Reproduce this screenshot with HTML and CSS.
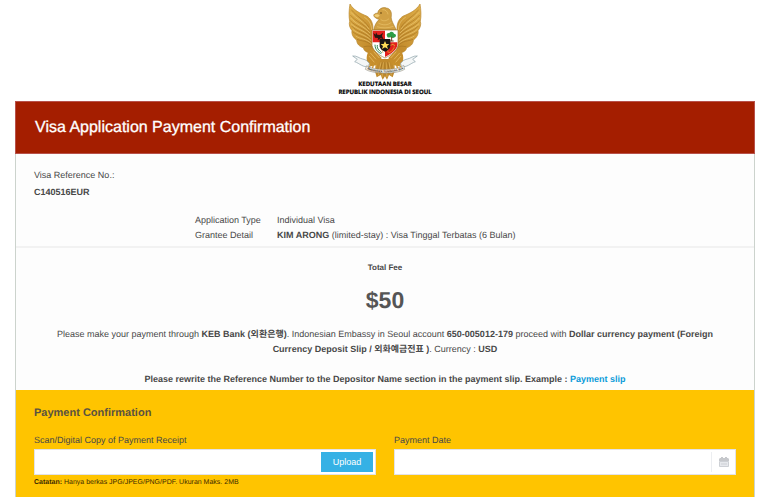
FILE: index.html
```html
<!DOCTYPE html>
<html lang="en">
<head>
<meta charset="utf-8">
<title>Visa Application Payment Confirmation</title>
<link rel="stylesheet" href="styles.css">
</head>
<body>
<header class="masthead">
  <svg class="emblem" viewBox="36 9 222 231" aria-hidden="true">
    <defs>
      <linearGradient id="gold" x1="0" y1="0" x2="1" y2="1">
        <stop offset="0" stop-color="#e0b04a"/>
        <stop offset="1" stop-color="#bd8426"/>
      </linearGradient>
      <g id="wing">
        <path fill="url(#gold)" stroke="#b8862d" stroke-width="2" d="M42 12 C39 30 38 48 41 64 C38 72 41 84 48 92 C46 103 52 113 62 120 C62 132 71 140 82 143 C83 151 91 157 99 158 L119 150 L110 95 C114 70 104 55 92 48 C72 40 52 30 42 12 Z"/>
        <g fill="none" stroke="#9c6b1d" stroke-width="1.5">
          <path d="M46 29 C62 50 82 56 99 82"/>
          <path d="M43 45 C60 66 82 69 101 94"/>
          <path d="M43 62 C60 81 82 83 103 105"/>
          <path d="M47 78 C61 95 84 96 105 116"/>
          <path d="M50 95 C67 110 85 108 107 127"/>
          <path d="M63 118 C79 125 92 120 109 138"/>
          <path d="M83 140 C92 140 99 134 112 145"/>
        </g>
        <g fill="none" stroke="#f5d98c" stroke-width="1.5">
          <path d="M45 37 C62 58 82 62 99 88"/>
          <path d="M44 54 C62 75 82 77 102 99"/>
          <path d="M45 71 C62 88 84 90 104 111"/>
          <path d="M50 88 C66 103 86 102 106 122"/>
          <path d="M59 108 C75 119 90 114 108 133"/>
          <path d="M85 52 C99 60 106 72 107 90"/>
        </g>
      </g>
      <path id="star" d="M147 123 L151 132 L160 132 L153 138 L156 147 L147 142 L138 147 L141 138 L134 132 L143 132 Z"/>
    </defs>
    <use href="#wing"/>
    <use href="#wing" transform="translate(294 0) scale(-1 1)"/>
    <path fill="#c08a2d" d="M129 177 L165 177 L177 211 L170 232 L159 225 L153 239 L147 229 L140 239 L134 225 L122 232 L116 211 Z"/>
    <g fill="none" stroke="#f0cb73" stroke-width="1.5">
      <path d="M135 187 L127 226 M142 187 L138 231 M150 187 L153 231 M159 187 L166 226"/>
      <path stroke="#8c601b" d="M139 187 L132 215 M147 187 L147 223 M155 187 L161 215"/>
    </g>
    <path fill="#c68e2c" d="M110 145 C94 151 90 169 93 185 L105 199 L127 194 L137 174 Z M184 145 C200 151 204 169 201 185 L189 199 L167 194 L157 174 Z"/>
    <path fill="none" stroke="#efc76d" stroke-width="2" d="M103 159 L120 178 M99 168 L115 187 M113 155 L130 174 M191 159 L174 178 M195 168 L179 187 M181 155 L164 174"/>
    <path fill="#d1a043" stroke="#9d701f" stroke-width="1.5" d="M113 90 C116 75 121 66 130 58 C121 57 113 51 113 45 C116 40 121 39 125 40 C126 26 142 20 151 24 C162 25 168 36 166 48 C164 60 173 72 181 90 Z"/>
    <path fill="#f1cf79" d="M115 46 C119 41 128 42 131 47 L125 52 C121 51 117 51 115 46 Z"/>
    <circle cx="135" cy="39" r="2.5" fill="#5b3c0c"/>
    <path fill="none" stroke="#f2cf79" stroke-width="1.5" d="M139 29 C148 28 155 35 156 43 M134 58 C140 64 151 64 159 56 M127 69 C141 77 155 76 166 67 M123 80 C137 85 157 85 172 79"/>
    <path fill="#fff" stroke="#9a7532" stroke-width="2" d="M108 90 H186 V136 C183 152 167 164 147 174 C127 164 111 152 108 136 Z"/>
    <path fill="#e4201d" d="M110 92 H147 V127 H110 Z M147 127 H184 V136 C182 150 165 162 147 171 Z"/>
    <path fill="#2a1712" d="M112 99 L119 104 L120 97 L124 104 L132 105 L141 98 L138 108 L143 118 L134 115 L125 121 L126 114 L117 113 Z"/>
    <path fill="#2c9d46" d="M153 108 C150 103 154 98 160 99 C165 92 173 96 174 101 C181 101 182 110 176 112 C170 116 166 112 162 112 C157 114 154 112 153 108 Z"/>
    <path fill="none" stroke="#6a431f" stroke-width="3" d="M167 110 V123 M162 123 H173"/>
    <path fill="none" stroke="#308750" stroke-width="3" d="M117 134 C117 150 128 158 136 161 M124 135 C122 149 133 153 137 158"/>
    <path fill="none" stroke="#d9b04e" stroke-width="2" d="M132 131 C134 143 139 150 141 159"/>
    <ellipse cx="165" cy="145" rx="7" ry="14" transform="rotate(35 165 145)" fill="none" stroke="#e6a62f" stroke-width="3" stroke-dasharray="3 1"/>
    <path fill="#1b1715" d="M131 117 H163 V140 C161 147 154 152 147 155 C139 151 133 147 131 140 Z"/>
    <use href="#star" fill="#ffdc56"/>
    <path fill="#f5f7f7" stroke="#879da4" stroke-width="2" d="M98 199 C82 204 71 190 56 185 L64 178 L50 168 C62 166 71 176 80 177 C90 179 96 184 100 190 Z M196 199 C212 204 223 190 238 185 L230 178 L244 168 C232 166 223 176 214 177 C204 179 198 184 194 190 Z"/>
    <path fill="#f5f3e9" stroke="#807d72" stroke-width="1.5" d="M92 197 C112 212 181 213 203 196 L206 208 C182 224 111 223 88 208 Z"/>
    <path id="motto-line" fill="none" d="M90 205 C115 222 179 222 206 204"/>
    <text class="motto"><textPath href="#motto-line" startOffset="50%">BHINNEKA TUNGGAL IKA</textPath></text>
    <path fill="none" stroke="#c9922e" stroke-width="4" stroke-linecap="round" d="M105 190 L101 200 M113 191 L110 203 M121 190 L120 203 M173 190 L174 203 M181 191 L184 203 M189 190 L193 200"/>
  </svg>
  <p class="office">KEDUTAAN BESAR<br>REPUBLIK INDONESIA DI SEOUL</p>
</header>

<main class="panel">
  <h1 class="panel-title">Visa Application Payment Confirmation</h1>

  <section class="application">
    <p class="reference">Visa Reference No.:<br><strong>C140516EUR</strong></p>
    <dl class="details">
      <dt>Application Type</dt><dd>Individual Visa</dd>
      <dt>Grantee Detail</dt><dd><strong>KIM ARONG</strong> (limited-stay) : Visa Tinggal Terbatas (6 Bulan)</dd>
    </dl>
  </section>

  <section class="fee">
    <h2 class="fee-label">Total Fee</h2>
    <p class="amount">$50</p>
    <p class="instructions">Please make your payment through <strong>KEB Bank (외환은행)</strong>. Indonesian Embassy in Seoul account <strong>650-005012-179</strong> proceed with <strong>Dollar currency payment (Foreign<br>Currency Deposit Slip / 외화예금전표 )</strong>. Currency : <strong>USD</strong></p>
    <p class="reminder">Please rewrite the Reference Number to the Depositor Name section in the payment slip. Example : <a href="#slip">Payment slip</a></p>
  </section>

  <form class="confirmation">
    <h2 class="form-title">Payment Confirmation</h2>
    <div class="fields">
      <div class="field">
        <label for="receipt">Scan/Digital Copy of Payment Receipt</label>
        <div class="control">
          <input id="receipt" type="text">
          <button class="upload" type="button">Upload</button>
        </div>
        <p class="note"><strong>Catatan:</strong> Hanya berkas JPG/JPEG/PNG/PDF. Ukuran Maks. 2MB</p>
      </div>
      <div class="field">
        <label for="date">Payment Date</label>
        <div class="control">
          <input id="date" type="text">
          <button class="calendar" type="button" aria-label="Choose date">
            <svg viewBox="0 0 10 10" aria-hidden="true">
              <path fill="#c6c8cc" d="M1 1h1V0h2v1h2V0h2v1h1l1 1v2H0V2z"/>
              <path fill="#e6e8ec" stroke="#cdd0d5" d="M.5 4.5h9v5h-9z"/>
              <path stroke="#cdd0d5" d="M2 7h6"/>
            </svg>
          </button>
        </div>
      </div>
    </div>
  </form>
</main>
</body>
</html>
```
FILE: styles.css
```css
* {
  box-sizing: border-box;
}

body {
  margin: 0;
  padding: 3px 13px 0 15px;
  background: #fff;
  color: #484848;
  font: 9px/15px "Liberation Sans", "Noto Sans CJK KR", sans-serif;
  text-rendering: geometricPrecision;
}

h1, h2, p, dl, dd {
  margin: 0;
}

.masthead {
  display: flex;
  flex-direction: column;
  align-items: center;
  height: 98px;
}

.emblem {
  width: 74px;
  height: 77px;
}

.motto {
  fill: #333;
  font: bold 9px "Liberation Sans", sans-serif;
  text-anchor: middle;
}

.office {
  color: #000;
  font: bold 6px/8px "Open Sans", sans-serif;
  text-align: center;
  -webkit-text-stroke: 0.2px;
}

.panel {
  display: flex;
  flex-direction: column;
  min-height: calc(100vh - 101px);
  border: 1px solid #ccd3cd;
  border-bottom: 0;
  background: #fdfdfd;
}

.panel-title {
  margin: -1px -1px 0;
  padding: 14px 19px;
  border: 1px solid #b8514a;
  background: #a41e00;
  color: #fff;
  font-size: 16px;
  font-weight: normal;
  line-height: 23px;
  -webkit-text-stroke: 0.3px;
}

.application {
  padding: 13px 18px 3px;
  border-bottom: 2px solid #f2f2f2;
}

.reference {
  line-height: 17px;
}

.details {
  display: grid;
  grid-template-columns: 82px 1fr;
  margin: 12px 0 0 161px;
}

.fee {
  padding: 12px 19px 3px;
  text-align: center;
}

.fee-label {
  font-size: 8px;
  line-height: 15px;
}

.amount {
  margin: 12px 0 14px;
  color: #555;
  font-size: 23px;
  font-weight: bold;
  line-height: 26px;
}

.reminder {
  margin-top: 15px;
  font-weight: bold;
}

a {
  color: #0a9bd9;
  text-decoration: none;
}

.confirmation {
  flex: 1;
  padding: 15px 18px 0;
  background: #ffc400;
}

.form-title {
  color: #5a5240;
  font-size: 11px;
  font-weight: bold;
  line-height: 16px;
}

.fields {
  display: grid;
  grid-template-columns: 1fr 1fr;
  gap: 18px;
  margin-top: 12px;
}

.field label {
  display: block;
}

.control {
  display: flex;
  height: 26px;
  margin-top: 1px;
  border: 1px solid #e2e2e8;
  background: #fff;
}

.control input {
  flex: 1;
  min-width: 0;
  border: 0;
  background: transparent;
}

.upload {
  width: 52px;
  margin: 2px;
  padding: 0;
  border: 0;
  background: #35b1e5;
  color: #fff;
  font: 9px "Liberation Sans", sans-serif;
}

.calendar {
  display: grid;
  place-items: center;
  width: 24px;
  margin: 2px 0;
  padding: 0;
  border: 0;
  border-left: 1px solid #eceef1;
  background: transparent;
}

.calendar svg {
  width: 10px;
  height: 10px;
}

.note {
  color: #402b00;
  font-size: 7px;
}
```
